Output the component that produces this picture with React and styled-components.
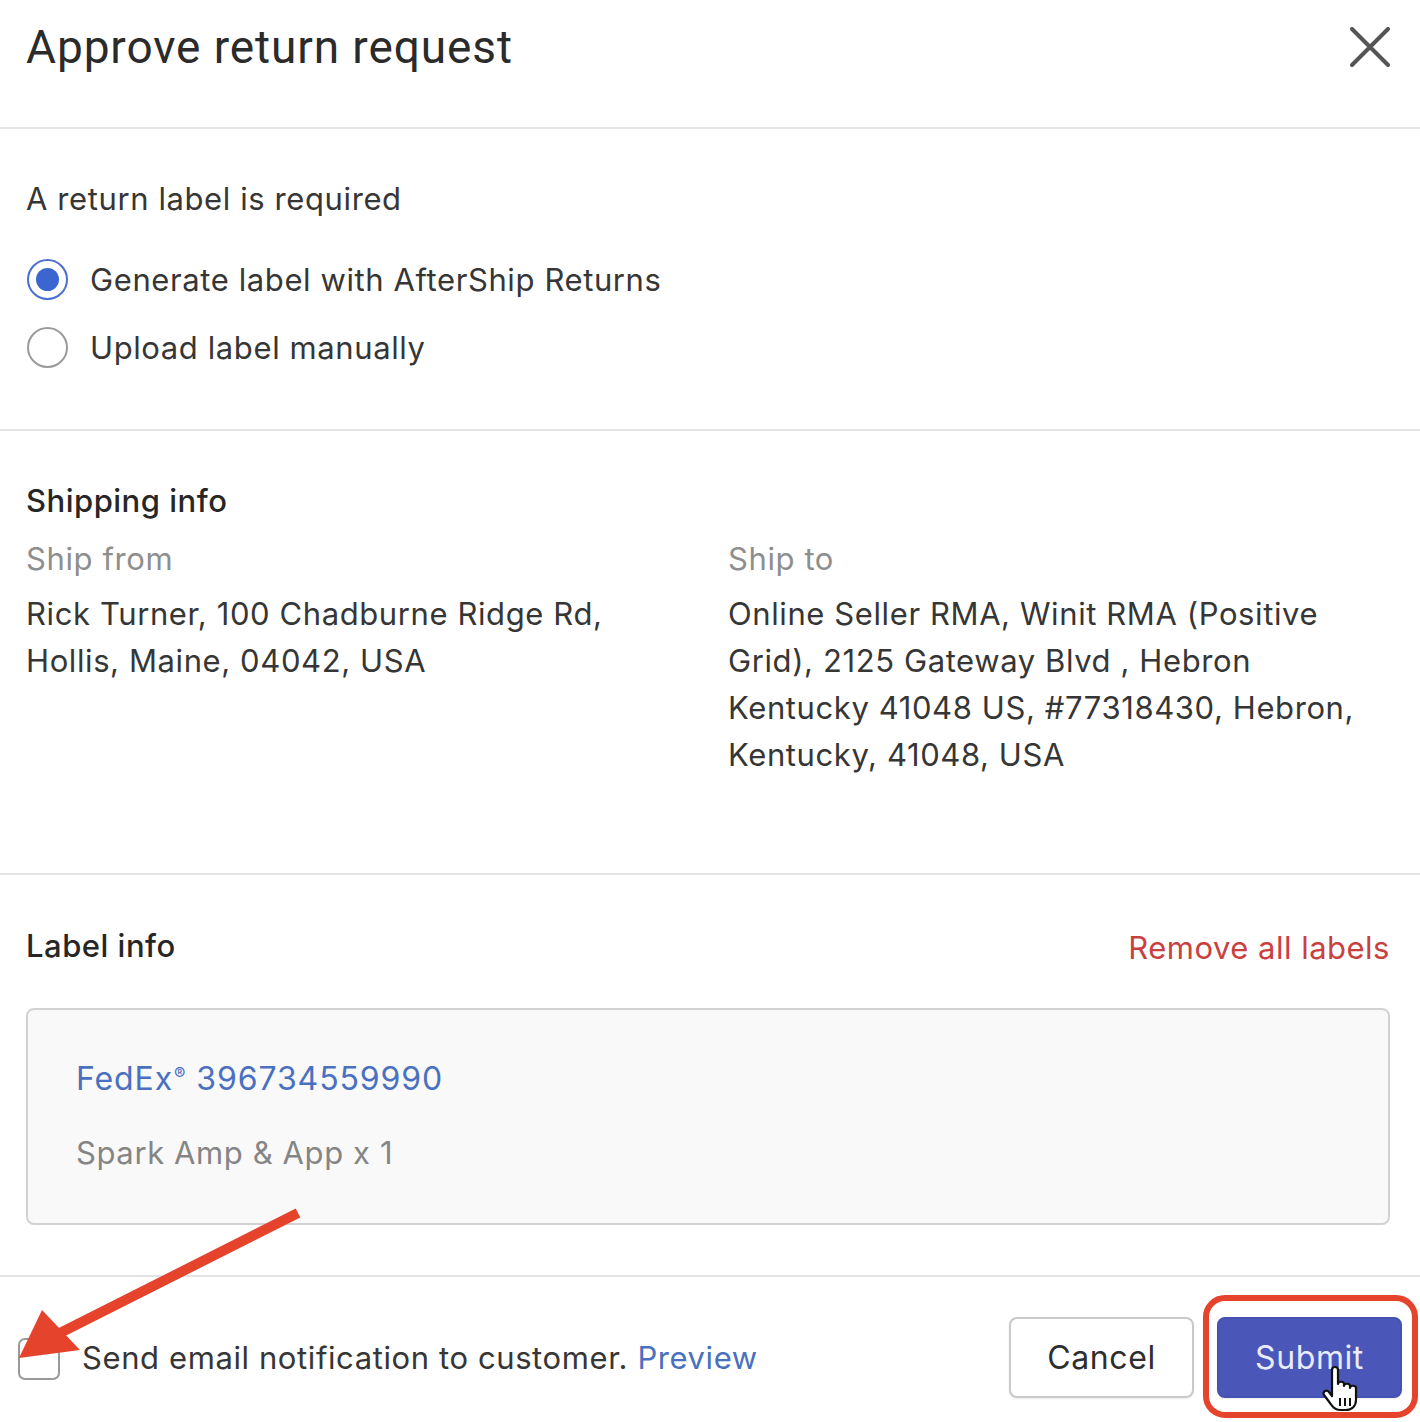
import React from 'react';
import styled, { createGlobalStyle } from 'styled-components';

const GlobalStyle = createGlobalStyle`
  html, body {
    margin: 0;
    padding: 0;
    background: #ffffff;
  }
  body {
    font-family: Inter, Roboto, "Liberation Sans", Arial, sans-serif;
    color: #333333;
  }
`;

const Modal = styled.div`
  position: relative;
  width: 1420px;
  height: 1422px;
  overflow: hidden;
  background: #ffffff;
`;

const Header = styled.div`
  display: flex;
  justify-content: space-between;
  align-items: flex-start;
  height: 129px;
  padding: 19px 30px 0 26px;
  box-sizing: border-box;
  border-bottom: 2px solid #e4e4e4;
`;

const Title = styled.h1`
  margin: 0;
  font-family: Roboto, "Liberation Sans", Arial, sans-serif;
  font-size: 46px;
  line-height: 56px;
  font-weight: 400;
  color: #2b2b2b;
  letter-spacing: 0.9px;
`;

const CloseBtn = styled.button`
  border: 0;
  background: none;
  padding: 0;
  margin-top: 8px;
  width: 40px;
  height: 40px;
  cursor: pointer;
`;

const Section = styled.section`
  padding: ${p => p.$top || 50}px 28px ${p => p.$bottom || 48}px 26px;
  border-bottom: 2px solid #e4e4e4;
`;

const Text = styled.div`
  font-size: 31px;
  line-height: 40px;
  letter-spacing: 0.6px;
  color: ${p => p.$muted ? '#8e8e8e' : '#363636'};
`;

const Heading = styled.div`
  font-size: 31px;
  line-height: 40px;
  font-weight: 500;
  letter-spacing: 0.5px;
  color: #262626;
`;

const RadioList = styled.div`
  margin-top: 26px;
  display: flex;
  flex-direction: column;
`;

const RadioRow = styled.label`
  display: flex;
  align-items: center;
  height: 68px;
  gap: 22px;
  font-size: 31px;
  letter-spacing: 0.6px;
  color: #363636;
  cursor: pointer;
`;

const RadioDot = styled.span`
  position: relative;
  width: 41px;
  height: 41px;
  margin-left: 1px;
  border-radius: 50%;
  box-sizing: border-box;
  border: 2px solid ${p => p.$checked ? '#4a6fd0' : '#9a9a9a'};
  background: #fff;
  flex: none;
  &::after {
    content: '';
    display: ${p => p.$checked ? 'block' : 'none'};
    position: absolute;
    inset: 7px;
    border-radius: 50%;
    background: #3c66cf;
  }
`;

const Columns = styled.div`
  display: grid;
  grid-template-columns: 702px 1fr;
  margin-top: 18px;
`;

const Address = styled.div`
  margin-top: 11px;
  font-size: 31px;
  line-height: 47px;
  letter-spacing: 0.6px;
  color: #363636;
`;

const LabelHead = styled.div`
  display: flex;
  justify-content: space-between;
  align-items: center;
  padding-right: 2px;
`;

const DangerLink = styled.a`
  font-size: 31px;
  line-height: 40px;
  letter-spacing: 0.5px;
  color: #c8413f;
  text-decoration: none;
  margin-top: 4px;
`;

const LabelCard = styled.div`
  margin-top: 40px;
  margin-right: 2px;
  height: 217px;
  box-sizing: border-box;
  padding: 44px 48px 0;
  border: 2px solid #d2d2d2;
  border-radius: 8px;
  background: #f9f9fa;
`;

const Tracking = styled.a`
  display: block;
  font-size: 32px;
  line-height: 40px;
  letter-spacing: 0.9px;
  color: #4a70c0;
  text-decoration: none;
  sup {
    font-size: 17px;
    vertical-align: 10px;
    margin: 0 0 0 1px;
  }
`;

const ItemLine = styled.div`
  margin-top: 34px;
  font-size: 31px;
  line-height: 40px;
  letter-spacing: 0.6px;
  color: #858585;
`;

const Footer = styled.footer`
  display: flex;
  justify-content: space-between;
  align-items: center;
  padding: 40px 18px 0 18px;
`;

const Notify = styled.label`
  display: flex;
  align-items: center;
  gap: 22px;
  font-size: 31px;
  letter-spacing: 0.6px;
  color: #363636;
`;

const Checkbox = styled.span`
  width: 42px;
  height: 42px;
  box-sizing: border-box;
  border: 2px solid #9a9a9a;
  border-radius: 7px;
  background: #fff;
  margin-top: 2px;
`;

const InlineLink = styled.a`
  color: #4a70c0;
  text-decoration: none;
`;

const Actions = styled.div`
  display: flex;
  gap: 23px;
`;

const Button = styled.button`
  width: 185px;
  height: 81px;
  border-radius: 8px;
  font-family: inherit;
  font-size: 32px;
  letter-spacing: 0.6px;
  cursor: pointer;
  border: 2px solid ${p => p.$primary ? '#4552b3' : '#c9c9c9'};
  background: ${p => p.$primary ? '#4a56b8' : '#ffffff'};
  color: ${p => p.$primary ? '#e9ebff' : '#2e2e2e'};
  box-shadow: 0 1px 2px rgba(0, 0, 0, 0.08);
`;

/* annotation overlays drawn on top of the screenshot */
const Highlight = styled.div`
  position: absolute;
  left: 1203px;
  top: 1295px;
  width: 215px;
  height: 123px;
  box-sizing: border-box;
  border: 6px solid #e5432b;
  border-radius: 22px;
  pointer-events: none;
`;

const Overlay = styled.svg`
  position: absolute;
  left: 0;
  top: 0;
  pointer-events: none;
`;

function CloseIcon() {
  return (
    <svg width="40" height="40" viewBox="0 0 40 40">
      <path d="M2 2 L38 38 M38 2 L2 38" stroke="#555" strokeWidth="4" strokeLinecap="round" />
    </svg>
  );
}

function App() {
  return (
    <Modal>
      <GlobalStyle />
      <Header>
        <Title>Approve return request</Title>
        <CloseBtn aria-label="Close"><CloseIcon /></CloseBtn>
      </Header>

      <Section>
        <Text>A return label is required</Text>
        <RadioList>
          <RadioRow><RadioDot $checked />Generate label with AfterShip Returns</RadioRow>
          <RadioRow><RadioDot />Upload label manually</RadioRow>
        </RadioList>
      </Section>

      <Section $bottom={95}>
        <Heading>Shipping info</Heading>
        <Columns>
          <div>
            <Text $muted>Ship from</Text>
            <Address>Rick Turner, 100 Chadburne Ridge Rd,<br />Hollis, Maine, 04042, USA</Address>
          </div>
          <div>
            <Text $muted>Ship to</Text>
            <Address>
              Online Seller RMA, Winit RMA (Positive<br />
              Grid), 2125 Gateway Blvd , Hebron<br />
              Kentucky 41048 US, #77318430, Hebron,<br />
              Kentucky, 41048, USA
            </Address>
          </div>
        </Columns>
      </Section>

      <Section $top={49} $bottom={50}>
        <LabelHead>
          <Heading>Label info</Heading>
          <DangerLink href="#">Remove all labels</DangerLink>
        </LabelHead>
        <LabelCard>
          <Tracking href="#">FedEx<sup>®</sup> 396734559990</Tracking>
          <ItemLine>Spark Amp &amp; App x 1</ItemLine>
        </LabelCard>
      </Section>

      <Footer>
        <Notify>
          <Checkbox />
          <span>Send email notification to customer. <InlineLink href="#">Preview</InlineLink></span>
        </Notify>
        <Actions>
          <Button>Cancel</Button>
          <Button $primary>Submit</Button>
        </Actions>
      </Footer>

      <Highlight />
      <Overlay width="1420" height="1422" viewBox="0 0 1420 1422">
        <line x1="298" y1="1213" x2="58" y2="1334" stroke="#e5432b" strokeWidth="10" />
        <polygon points="19,1358 42,1310 80,1350" fill="#e5432b" />
        <g transform="translate(1322 1366)">
          <path
            d="M10 4 C10 0 16 0 16 4 L16 18 C16 15 22 15 22 18 L22 20 C22 17 28 17 28 20 L28 22 C28 19 34 19 34 22 L34 34 C34 40 30 44 24 44 L18 44 C13 44 11 41 8 37 L2 29 C0 26 4 23 7 26 L10 30 Z"
            fill="#fff"
            stroke="#111"
            strokeWidth="2.2"
            strokeLinejoin="round"
          />
          <path d="M18 32 V40 M23 32 V40 M28 32 V40" stroke="#111" strokeWidth="2" />
        </g>
      </Overlay>
    </Modal>
  );
}

export default App;
